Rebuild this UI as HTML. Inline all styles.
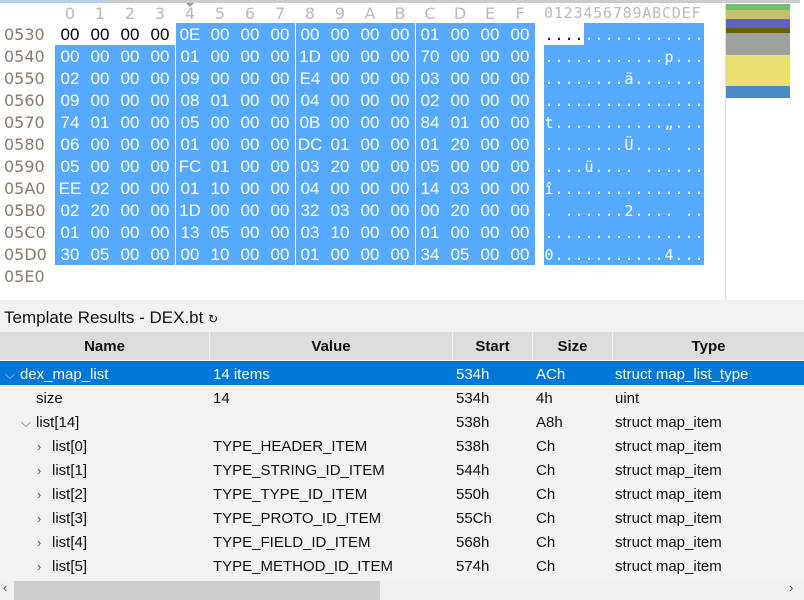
<!DOCTYPE html><html><head><meta charset="utf-8"><style>
body{margin:0;width:804px;height:600px;overflow:hidden;background:#fff;font-family:"Liberation Sans",sans-serif;position:relative}
.a{position:absolute}
.hdr{position:absolute;top:4px;font-size:16px;color:#bbb;font-family:"DejaVu Sans",sans-serif}
.off{position:absolute;left:4px;font-size:16px;color:#8a7a6a;font-family:"DejaVu Sans",sans-serif}
.row{position:absolute;left:55px;height:22px;font-size:17px;font-family:"Liberation Sans",sans-serif;color:#fff;line-height:24px}
.row span{position:absolute;width:30px;text-align:center}
.asc{position:absolute;left:544px;height:22px;font-size:15px;font-family:"DejaVu Sans Mono",monospace;color:#fff;line-height:24px}
.asc span{display:inline-block;width:10px;text-align:center}
.tr{position:absolute;left:0;width:804px;height:24px;font-size:15px;line-height:28px;color:#111}
.tr div{position:absolute;top:0;white-space:nowrap}
</style></head><body>
<div class="a" style="left:0;top:0;width:800px;height:3px;background:#ccc"></div>
<div class="a" style="left:0;top:0;width:108px;height:3px;background:#b8d0ee"></div>
<div class="a" style="left:186px;top:3px;width:0;height:0;border-left:4px solid transparent;border-right:4px solid transparent;border-top:4px solid #999"></div>
<div class="a" style="left:725px;top:0;width:1px;height:300px;background:#ddd"></div>
<div class="a" style="left:726px;top:4px;width:64px;height:6px;background:#70c070"></div>
<div class="a" style="left:726px;top:10px;width:64px;height:9px;background:#c8c068"></div>
<div class="a" style="left:726px;top:19px;width:64px;height:9px;background:#6060c0"></div>
<div class="a" style="left:726px;top:28px;width:64px;height:5px;background:#6a6200"></div>
<div class="a" style="left:726px;top:33px;width:64px;height:22px;background:#a0a0a0"></div>
<div class="a" style="left:726px;top:55px;width:64px;height:31px;background:#eae070"></div>
<div class="a" style="left:726px;top:86px;width:64px;height:12px;background:#4a88c8"></div>
<div class="a" style="left:175px;top:23px;width:360px;height:22px;background:#55aaff"></div>
<div class="a" style="left:55px;top:45px;width:480px;height:220px;background:#55aaff"></div>
<div class="a" style="left:584px;top:23px;width:120px;height:22px;background:#55aaff"></div>
<div class="a" style="left:544px;top:45px;width:160px;height:220px;background:#55aaff"></div>
<div class="a" style="left:175px;top:23px;width:1px;height:242px;background:#fff"></div>
<div class="a" style="left:295px;top:23px;width:1px;height:242px;background:#fff"></div>
<div class="a" style="left:415px;top:23px;width:1px;height:242px;background:#fff"></div>
<div id="hx"></div>
<script>
var h='';
var hd='0123456789ABCDEF';
for(var i=0;i<16;i++)h+='<div class="hdr" style="left:'+(55+i*30)+'px;width:30px;text-align:center">'+hd[i]+'</div>';
h+='<div class="hdr" style="left:544px;font-family:\'DejaVu Sans Mono\',monospace;font-size:15px;letter-spacing:0.8px">0123456789ABCDEF</div>';
var d=[
["0530","00 00 00 00 0E 00 00 00 00 00 00 00 01 00 00 00","................"],
["0540","00 00 00 00 01 00 00 00 1D 00 00 00 70 00 00 00","............p..."],
["0550","02 00 00 00 09 00 00 00 E4 00 00 00 03 00 00 00","........ä......."],
["0560","09 00 00 00 08 01 00 00 04 00 00 00 02 00 00 00","................"],
["0570","74 01 00 00 05 00 00 00 0B 00 00 00 84 01 00 00","t...........„..."],
["0580","06 00 00 00 01 00 00 00 DC 01 00 00 01 20 00 00","........Ü.... .."],
["0590","05 00 00 00 FC 01 00 00 03 20 00 00 05 00 00 00","....ü.... ......"],
["05A0","EE 02 00 00 01 10 00 00 04 00 00 00 14 03 00 00","î..............."],
["05B0","02 20 00 00 1D 00 00 00 32 03 00 00 00 20 00 00",". ......2.... .."],
["05C0","01 00 00 00 13 05 00 00 03 10 00 00 01 00 00 00","................"],
["05D0","30 05 00 00 00 10 00 00 01 00 00 00 34 05 00 00","0...........4..."],
["05E0","",""]];
for(var r=0;r<d.length;r++){var y=23+r*22;
h+='<div class="off" style="top:'+(y+1)+'px;line-height:22px">'+d[r][0]+'</div>';
if(d[r][1]){var b=d[r][1].split(' ');var s='<div class="row" style="top:'+y+'px">';
for(var i=0;i<16;i++)s+='<span style="left:'+(i*30)+'px;'+(r==0&&i<4?'color:#000':'')+'">'+b[i]+'</span>';
h+=s+'</div>';
var a='<div class="asc" style="top:'+y+'px">';for(var i=0;i<16;i++)a+='<span'+(r==0&&i<4?' style="color:#000"':'')+'>'+d[r][2][i]+'</span>';h+=a+'</div>';}}
document.getElementById('hx').innerHTML=h;
</script>
<div class="a" style="left:0;top:300px;width:804px;height:300px;background:#f2f2f2"></div>
<div class="a" style="left:4px;top:308px;font-size:17px;color:#111">Template Results - DEX.bt <span style="font-size:12px">&#x21BB;</span></div>
<div class="a" style="left:0;top:332px;width:804px;height:28px;background:#dcdcdc;font-size:15px;font-weight:bold;color:#111;line-height:30px">
<div class="a" style="left:0;width:209px;text-align:center">Name</div>
<div class="a" style="left:210px;width:242px;text-align:center">Value</div>
<div class="a" style="left:453px;width:79px;text-align:center">Start</div>
<div class="a" style="left:533px;width:79px;text-align:center">Size</div>
<div class="a" style="left:613px;width:191px;text-align:center">Type</div>
<div class="a" style="left:209px;top:0;width:1px;height:28px;background:#f2f2f2"></div>
<div class="a" style="left:452px;top:0;width:1px;height:28px;background:#f2f2f2"></div>
<div class="a" style="left:532px;top:0;width:1px;height:28px;background:#f2f2f2"></div>
<div class="a" style="left:612px;top:0;width:1px;height:28px;background:#f2f2f2"></div>
</div>
<div id="tb"></div>
<script>
var rows=[
[5,"⌵","dex_map_list","14 items","534h","ACh","struct map_list_type"],
[36,"","size","14","534h","4h","uint"],
[21,"⌵","list[14]","","538h","A8h","struct map_item"],
[37,"›","list[0]","TYPE_HEADER_ITEM","538h","Ch","struct map_item"],
[37,"›","list[1]","TYPE_STRING_ID_ITEM","544h","Ch","struct map_item"],
[37,"›","list[2]","TYPE_TYPE_ID_ITEM","550h","Ch","struct map_item"],
[37,"›","list[3]","TYPE_PROTO_ID_ITEM","55Ch","Ch","struct map_item"],
[37,"›","list[4]","TYPE_FIELD_ID_ITEM","568h","Ch","struct map_item"],
[37,"›","list[5]","TYPE_METHOD_ID_ITEM","574h","Ch","struct map_item"]];
var t='';
for(var r=0;r<rows.length;r++){var R=rows[r];var sel=r==0;
t+='<div class="tr" style="top:'+(361+r*24)+'px;'+(sel?'background:#0078d7;color:#fff':'')+'">';
var ax=R[0];
if(R[1])t+='<div style="left:'+ax+'px;color:'+(sel?'#cce':'#666')+';font-size:13px">'+R[1]+'</div>';
t+='<div style="left:'+(R[1]?ax+15:ax)+'px">'+R[2]+'</div><div style="left:213px">'+R[3]+'</div><div style="left:456px">'+R[4]+'</div><div style="left:536px">'+R[5]+'</div><div style="left:615px">'+R[6]+'</div></div>';}
document.getElementById('tb').innerHTML=t;
</script>
<div class="a" style="left:0;top:580px;width:804px;height:20px;background:#f0f0f0"></div>
<div class="a" style="left:14px;top:581px;width:366px;height:19px;background:#cdcdcd"></div>
<div class="a" style="left:3px;top:580px;font-size:13px;color:#555">‹</div>
<div class="a" style="left:789px;top:580px;font-size:13px;color:#555">›</div>
</body></html>
